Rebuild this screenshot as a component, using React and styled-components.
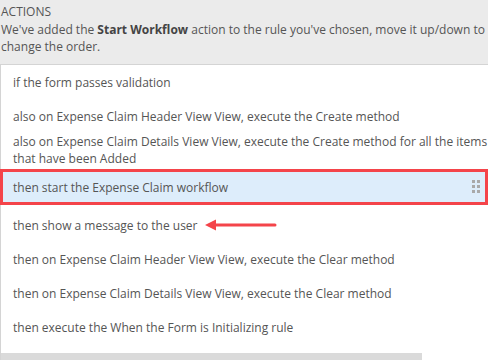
import React from "react";
import styled, { createGlobalStyle } from "styled-components";

const GlobalStyle = createGlobalStyle`
    body {
        margin: 0;
        background: #ebebeb;
        font-family: "Open Sans", "Liberation Sans", sans-serif;
        overflow: hidden;
    }
`;

//styles
const Page = styled.div`
    width: 488px;
    height: 360px;
    display: flex;
    flex-direction: column;
    background: #ebebeb;
    color: #555;
    font-size: 12px;
    line-height: 17.5px;
    overflow: hidden;
`;

const Intro = styled.div`
    padding: 3px 0 0 1px;
    height: 64px;
    box-sizing: border-box;
    flex-shrink: 0;
    white-space: nowrap;
`;

const Heading = styled.div`
    text-transform: uppercase;
`;

const Strong = styled.b`
    color: #444;
    font-weight: 700;
`;

const Panel = styled.div`
    flex: 1;
    background: #fff;
    border-top: 1px solid #d4d4d4;
    border-left: 1px solid #d4d4d4;
    display: flex;
    flex-direction: column;
    position: relative;
`;

const Row = styled.div`
    display: flex;
    align-items: center;
    min-height: 34px;
    padding: 0 0 0 12px;
    box-sizing: border-box;
    line-height: 17px;
    white-space: nowrap;
    position: relative;
`;

const ActiveRow = styled(Row)`
    margin: 2px 0 3px -1px;
    min-height: 36px;
    padding-left: 10px;
    background: #ddedfb;
    border: 3px solid #f4444a;
`;

const Grip = styled.div`
    position: absolute;
    right: 5px;
    top: 8px;
    display: grid;
    grid-template-columns: 3px 3px;
    gap: 2px;
    & span {
        width: 3px;
        height: 3px;
        background: #a9a9a9;
    }
`;

const Arrow = styled.svg`
    margin-left: 7px;
`;

const Scrollbar = styled.div`
    margin-top: auto;
    width: 421px;
    height: 7px;
    background: #dadada;
    flex-shrink: 0;
`;

const rows = [
    ["if the form passes validation"],
    ["also on Expense Claim Header View View, execute the Create method"],
    [
        "also on Expense Claim Details View View, execute the Create method for all the items",
        "that have been Added",
    ],
];

const rest = [
    "then on Expense Claim Header View View, execute the Clear method",
    "then on Expense Claim Details View View, execute the Clear method",
    "then execute the When the Form is Initializing rule",
];

//page component
const App = () => {
    return (
        <Page>
            <GlobalStyle />
            <Intro>
                <Heading>Actions</Heading>
                We've added the <Strong>Start Workflow</Strong> action to the
                rule you've chosen, move it up/down to
                <br />
                change the order.
            </Intro>
            <Panel>
                {rows.map((lines) => (
                    <Row key={lines[0]}>
                        <div>
                            {lines.map((line) => (
                                <div key={line}>{line}</div>
                            ))}
                        </div>
                    </Row>
                ))}
                <ActiveRow>
                    then start the Expense Claim workflow
                    <Grip>
                        {[0, 1, 2, 3, 4, 5].map((i) => (
                            <span key={i} />
                        ))}
                    </Grip>
                </ActiveRow>
                <Row>
                    then show a message to the user
                    <Arrow width="72" height="14" viewBox="0 0 72 14">
                        <polygon points="0,7 11,1.5 11,12.5" fill="#f4444a" />
                        <line
                            x1="10"
                            y1="7"
                            x2="70"
                            y2="7"
                            stroke="#f4444a"
                            strokeWidth="3"
                            strokeLinecap="round"
                        />
                    </Arrow>
                </Row>
                {rest.map((text) => (
                    <Row key={text}>{text}</Row>
                ))}
                <Scrollbar />
            </Panel>
        </Page>
    );
};

export default App;
